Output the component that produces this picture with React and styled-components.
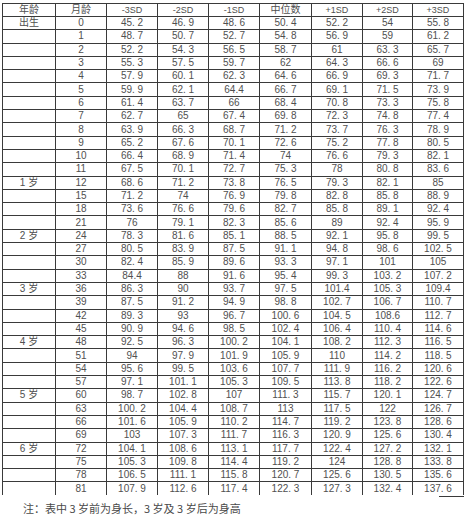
import React from 'react';
import styled, { createGlobalStyle } from 'styled-components';

const GlobalStyle = createGlobalStyle`
  html, body {
    margin: 0;
    padding: 0;
    background: #fff;
  }
  body {
    font-family: "Liberation Sans", "Noto Sans CJK SC", sans-serif;
    color: #4a4a4a;
  }
`

const Page = styled.div`
  width: 465px;
  height: 518px;
  padding: 3px 0 0 2px;
  box-sizing: border-box;
  overflow: hidden;
`

const Table = styled.table`
  width: 461px;
  border-collapse: collapse;
  table-layout: fixed;
  font-size: 10px;
`

const HeadRow = styled.tr`
  height: 13px;
`

const Row = styled.tr`
  height: 13.3px;
`

const Cell = styled.td`
  position: relative;
  padding: 0;
  text-align: center;
  line-height: 12px;
  white-space: pre;
  color: #505050;
  font-weight: normal;
  border-left: 1px solid #3a3a3a;
  border-right: 1px solid #3a3a3a;
  border-top: 1px solid #3a3a3a;
  border-bottom: ${(p) => (p.$last ? 'none' : '1px solid #3a3a3a')};
  font-size: ${(p) => (p.$head ? '9px' : '10px')};

  &::after {
    content: '';
    display: ${(p) => (p.$tail ? 'block' : 'none')};
    position: absolute;
    right: -1px;
    bottom: -2px;
    width: 25px;
    border-bottom: 1px solid #3a3a3a;
  }
`

const Note = styled.p`
  margin: 6px 0 0 21px;
  font-size: 11px;
  line-height: 14px;
  color: #4a4a4a;
  white-space: pre;
  font-family: "Noto Sans CJK SC", sans-serif;
`

const headers = ['年龄', '月龄', '-3SD', '-2SD', '-1SD', '中位数', '+1SD', '+2SD', '+3SD'];

const rows = [
  ['出生', '0', '45. 2', '46. 9', '48. 6', '50. 4', '52. 2', '54', '55. 8'],
  ['', '1', '48. 7', '50. 7', '52. 7', '54. 8', '56. 9', '59', '61. 2'],
  ['', '2', '52. 2', '54. 3', '56. 5', '58. 7', '61', '63. 3', '65. 7'],
  ['', '3', '55. 3', '57. 5', '59. 7', '62', '64. 3', '66. 6', '69'],
  ['', '4', '57. 9', '60. 1', '62. 3', '64. 6', '66. 9', '69. 3', '71. 7'],
  ['', '5', '59. 9', '62. 1', '64.4', '66. 7', '69. 1', '71. 5', '73. 9'],
  ['', '6', '61. 4', '63. 7', '66', '68. 4', '70. 8', '73. 3', '75. 8'],
  ['', '7', '62. 7', '65', '67. 4', '69. 8', '72. 3', '74. 8', '77. 4'],
  ['', '8', '63. 9', '66. 3', '68. 7', '71. 2', '73. 7', '76. 3', '78. 9'],
  ['', '9', '65. 2', '67. 6', '70. 1', '72. 6', '75. 2', '77. 8', '80. 5'],
  ['', '10', '66. 4', '68. 9', '71. 4', '74', '76. 6', '79. 3', '82. 1'],
  ['', '11', '67. 5', '70. 1', '72. 7', '75. 3', '78', '80. 8', '83. 6'],
  ['1 岁', '12', '68. 6', '71. 2', '73. 8', '76. 5', '79. 3', '82. 1', '85'],
  ['', '15', '71. 2', '74', '76. 9', '79. 8', '82. 8', '85. 8', '88. 9'],
  ['', '18', '73. 6', '76. 6', '79. 6', '82. 7', '85. 8', '89. 1', '92. 4'],
  ['', '21', '76', '79. 1', '82. 3', '85. 6', '89', '92. 4', '95. 9'],
  ['2 岁', '24', '78. 3', '81. 6', '85. 1', '88. 5', '92. 1', '95. 8', '99. 5'],
  ['', '27', '80. 5', '83. 9', '87. 5', '91. 1', '94. 8', '98. 6', '102. 5'],
  ['', '30', '82. 4', '85. 9', '89. 6', '93. 3', '97. 1', '101', '105'],
  ['', '33', '84.4', '88', '91. 6', '95. 4', '99. 3', '103. 2', '107. 2'],
  ['3 岁', '36', '86. 3', '90', '93. 7', '97. 5', '101.4', '105. 3', '109.4'],
  ['', '39', '87. 5', '91. 2', '94. 9', '98. 8', '102. 7', '106. 7', '110. 7'],
  ['', '42', '89. 3', '93', '96. 7', '100. 6', '104. 5', '108.6', '112. 7'],
  ['', '45', '90. 9', '94. 6', '98. 5', '102. 4', '106. 4', '110. 4', '114. 6'],
  ['4 岁', '48', '92. 5', '96. 3', '100. 2', '104. 1', '108. 2', '112. 3', '116. 5'],
  ['', '51', '94', '97. 9', '101. 9', '105. 9', '110', '114. 2', '118. 5'],
  ['', '54', '95. 6', '99. 5', '103. 6', '107. 7', '111. 9', '116. 2', '120. 6'],
  ['', '57', '97. 1', '101. 1', '105. 3', '109. 5', '113. 8', '118. 2', '122. 6'],
  ['5 岁', '60', '98. 7', '102. 8', '107', '111. 3', '115. 7', '120. 1', '124. 7'],
  ['', '63', '100. 2', '104. 4', '108. 7', '113', '117. 5', '122', '126. 7'],
  ['', '66', '101. 6', '105. 9', '110. 2', '114. 7', '119. 2', '123. 8', '128. 6'],
  ['', '69', '103', '107. 3', '111. 7', '116. 3', '120. 9', '125. 6', '130. 4'],
  ['6 岁', '72', '104. 1', '108. 6', '113. 1', '117. 7', '122. 4', '127. 2', '132. 1'],
  ['', '75', '105. 3', '109. 8', '114. 4', '119. 2', '124', '128. 8', '133. 8'],
  ['', '78', '106. 5', '111. 1', '115. 8', '120. 7', '125. 6', '130. 5', '135. 6'],
  ['', '81', '107. 9', '112. 6', '117. 4', '122. 3', '127. 3', '132. 4', '137. 6'],
];

const widths = [53, 51, 51, 51, 51, 52, 51, 50, 51];

export default function App() {
  return (
    <Page>
      <GlobalStyle />
      <Table>
        <colgroup>
          {widths.map((w, i) => (
            <col key={i} style={{ width: w }} />
          ))}
        </colgroup>
        <thead>
          <HeadRow>
            {headers.map((h) => (
              <Cell as="th" key={h} $head={/SD/.test(h)}>
                {h}
              </Cell>
            ))}
          </HeadRow>
        </thead>
        <tbody>
          {rows.map((r, i) => {
            const last = i === rows.length - 1;
            return (
              <Row key={i}>
                {r.map((v, j) => (
                  <Cell key={j} $last={last} $tail={last && j === r.length - 1}>
                    {v}
                  </Cell>
                ))}
              </Row>
            );
          })}
        </tbody>
      </Table>
      <Note>注：表中 3 岁前为身长，3 岁及 3 岁后为身高</Note>
    </Page>
  );
}
